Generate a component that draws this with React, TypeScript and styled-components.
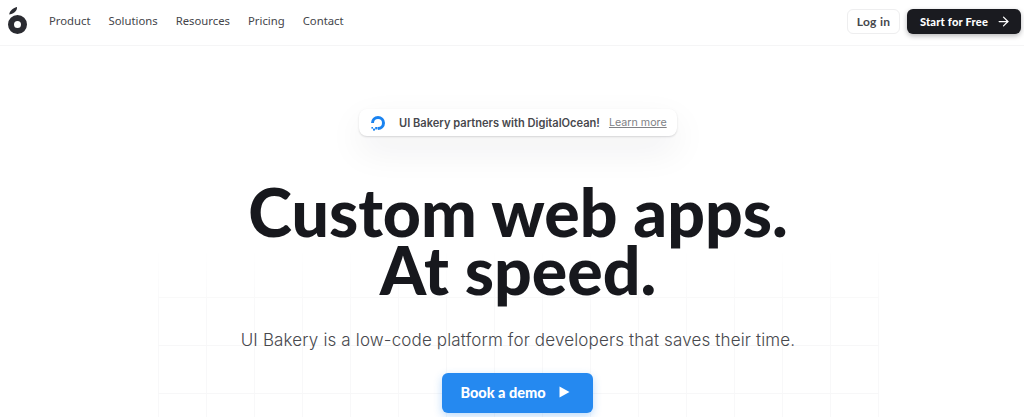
import React from 'react'
import styled, { createGlobalStyle } from 'styled-components'
import { ArrowRight } from 'lucide-react'

const GlobalStyle = createGlobalStyle`
  html, body {
    margin: 0;
    padding: 0;
    height: 417px;
    overflow: hidden;
    background: #fff;
    font-family: 'Inter', 'Liberation Sans', sans-serif;
  }
`

const Page = styled.div`
  height: 417px;
  overflow: hidden;
`

const Header = styled.header`
  height: 46px;
  box-sizing: border-box;
  display: flex;
  align-items: center;
  justify-content: space-between;
  padding: 0 3px 3px 8px;
  border-bottom: 1px solid #f5f5f6;
`

const Left = styled.div`
  display: flex;
  align-items: center;
`

const Nav = styled.nav`
  display: flex;
  gap: 18px;
  margin-left: 21px;
`

const NavLink = styled.a`
  font-family: 'Noto Sans', sans-serif;
  font-size: 11.3px;
  line-height: 18px;
  color: #44454a;
`

const Actions = styled.div`
  display: flex;
  align-items: center;
  gap: 7px;
`

const LoginButton = styled.button`
  width: 53px;
  height: 25px;
  padding: 0;
  border: 1px solid #eeeeef;
  border-radius: 6px;
  background: #fff;
  font-family: 'Lato', sans-serif;
  font-size: 12px;
  font-weight: 700;
  letter-spacing: 0.3px;
  color: #46474c;
`

const StartButton = styled.button`
  width: 114px;
  height: 25px;
  padding: 0 0 0 3px;
  border: none;
  border-radius: 6px;
  background: #1a1b20;
  box-shadow: 0 2px 5px rgba(20, 20, 25, 0.3);
  display: flex;
  align-items: center;
  justify-content: center;
  gap: 8px;
  font-family: 'Lato', sans-serif;
  font-size: 11.1px;
  font-weight: 900;
  letter-spacing: 0.2px;
  color: #fff;
`

const Hero = styled.main`
  position: relative;
  display: flex;
  flex-direction: column;
  align-items: center;
  padding: 63px 0 0 12px;
`

const GridBackdrop = styled.div`
  position: absolute;
  left: 158px;
  top: 203px;
  width: 721px;
  height: 240px;
  background-image:
    linear-gradient(#f7f7f8 1px, transparent 1px),
    linear-gradient(90deg, #f8f8f9 1px, transparent 1px);
  background-size: 48px 48px;
  -webkit-mask-image: linear-gradient(to bottom, transparent 0, #000 60px);
  mask-image: linear-gradient(to bottom, transparent 0, #000 60px);
`

const Banner = styled.a`
  position: relative;
  box-sizing: border-box;
  width: 318px;
  height: 27px;
  display: flex;
  align-items: center;
  padding-left: 11px;
  border-radius: 8px;
  background: #fff;
  box-shadow: 0 1px 2px rgba(30, 30, 40, 0.16), 0 14px 36px rgba(30, 30, 40, 0.07);
`

const BannerText = styled.span`
  margin-left: 13px;
  font-size: 11.1px;
  font-weight: 600;
  color: #47484d;
  white-space: nowrap;
`

const LearnMore = styled.span`
  margin-left: 9px;
  font-size: 10.7px;
  color: #808185;
  text-decoration: underline;
  white-space: nowrap;
`

const Title = styled.h1`
  position: relative;
  margin: 47px 0 0;
  font-family: 'Lato', sans-serif;
  font-size: 66.2px;
  font-weight: 900;
  line-height: 58px;
  text-align: center;
  color: #17181d;
`

const Subtitle = styled.p`
  position: relative;
  margin: 28px 0 0;
  font-size: 17px;
  font-weight: 300;
  line-height: 26px;
  letter-spacing: 0.15px;
  color: #47484d;
`

const DemoButton = styled.button`
  position: relative;
  width: 151px;
  height: 40px;
  margin: 20px 2px 0 0;
  flex-shrink: 0;
  padding: 0 4px 2px 0;
  border: none;
  border-radius: 6px;
  background: #2589f0;
  box-shadow: 0 3px 8px rgba(37, 137, 240, 0.3);
  display: flex;
  align-items: center;
  justify-content: center;
  gap: 13px;
  font-family: 'Lato', sans-serif;
  font-size: 14.5px;
  font-weight: 900;
  color: #fff;
`

function Logo() {
  return (
    <svg width="20" height="29" viewBox="0 0 20 29" fill="none">
      <path d="M9 0 C9.2 3 7.6 6 1.2 7.6 C1.6 4 4.4 1.4 9 0 Z" fill="#2a2b31" />
      <circle cx="9.5" cy="17.5" r="6.5" stroke="#2a2b31" strokeWidth="6" />
    </svg>
  )
}

function OceanMark() {
  return (
    <svg width="16" height="16" viewBox="0 0 16 16" fill="none">
      <path d="M8 15 V12 A4 4 0 1 0 4 8 H1 A7 7 0 1 1 8 15 Z" fill="#1a83f0" />
      <rect x="5.2" y="12" width="2.4" height="2.4" fill="#1a83f0" />
      <rect x="3" y="13.6" width="2" height="2" fill="#1a83f0" />
      <rect x="1.4" y="12" width="1.6" height="1.6" fill="#1a83f0" />
    </svg>
  )
}

function PlayIcon() {
  return (
    <svg width="11" height="12" viewBox="0 0 11 12">
      <path d="M0.5 0.5 L10.5 6 L0.5 11.5 Z" fill="#fff" />
    </svg>
  )
}

const links = ['Product', 'Solutions', 'Resources', 'Pricing', 'Contact']

export default function App() {
  return (
    <Page>
      <GlobalStyle />
      <Header>
        <Left>
          <Logo />
          <Nav>
            {links.map(l => (
              <NavLink key={l}>{l}</NavLink>
            ))}
          </Nav>
        </Left>
        <Actions>
          <LoginButton>Log in</LoginButton>
          <StartButton>
            Start for Free
            <ArrowRight size={15} strokeWidth={2} />
          </StartButton>
        </Actions>
      </Header>
      <Hero>
        <GridBackdrop />
        <Banner>
          <OceanMark />
          <BannerText>UI Bakery partners with DigitalOcean!</BannerText>
          <LearnMore>Learn more</LearnMore>
        </Banner>
        <Title>
          Custom web apps.
          <br />
          At speed.
        </Title>
        <Subtitle>UI Bakery is a low-code platform for developers that saves their time.</Subtitle>
        <DemoButton>
          Book a demo
          <PlayIcon />
        </DemoButton>
      </Hero>
    </Page>
  )
}
